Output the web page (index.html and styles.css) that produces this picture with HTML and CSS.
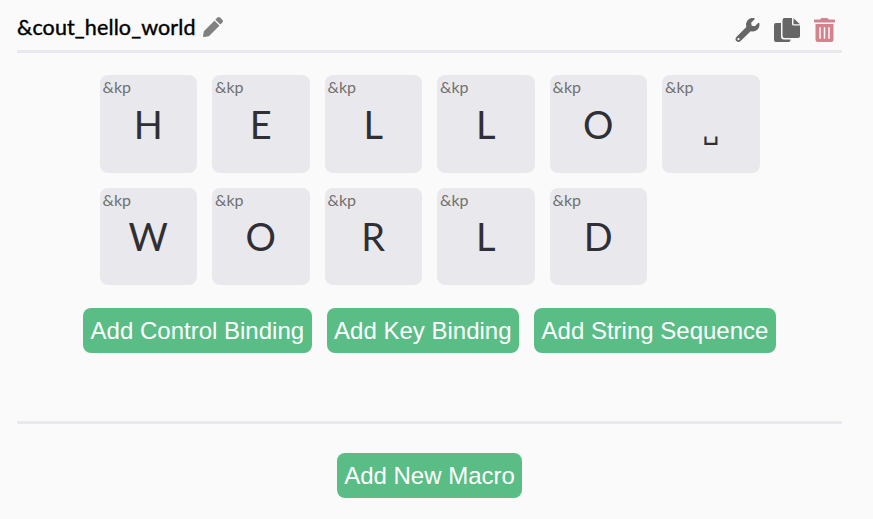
FILE: index.html
```html
<!DOCTYPE html>
<html lang="en">
<head>
<meta charset="utf-8">
<title>Macros</title>
<link rel="stylesheet" href="styles.css">
</head>
<body>
<main class="page">
  <section class="macro">
    <header class="macro-head">
      <div class="macro-title">
        <span class="macro-name">&amp;cout_hello_world</span>
        <svg class="icon icon-pencil" viewBox="0 0 512 512" aria-hidden="true"><path d="M497.900 142.100l-46.100 46.100c-4.700 4.700-12.300 4.700-17 0l-111-111c-4.700-4.700-4.700-12.300 0-17l46.100-46.100c18.700-18.700 49.100-18.700 67.900 0l60.100 60.100c18.800 18.700 18.800 49.100 0 67.900zM284.200 99.800L21.600 362.400.4 483.900c-2.900 16.400 11.400 30.600 27.800 27.800l121.500-21.300 262.600-262.600c4.700-4.700 4.700-12.300 0-17l-111-111c-4.800-4.700-12.400-4.700-17.100 0z"/></svg>
      </div>
      <div class="macro-actions">
        <svg class="icon icon-wrench" viewBox="0 0 512 512" aria-hidden="true"><path d="M507.730 109.100c-2.240-9.030-13.540-12.090-20.120-5.510l-74.360 74.360-67.880-11.310-11.310-67.880 74.360-74.360c6.620-6.620 3.430-17.900-5.660-20.160-47.380-11.740-99.550.91-136.580 37.930-39.640 39.640-50.550 97.100-34.050 147.200L18.740 402.760c-24.990 24.990-24.990 65.510 0 90.500 24.990 24.990 65.510 24.990 90.500 0l213.210-213.210c50.120 16.710 107.470 5.680 147.370-34.220 37.070-37.070 49.700-89.320 37.910-136.730zM64 472c-13.250 0-24-10.750-24-24 0-13.260 10.750-24 24-24s24 10.740 24 24c0 13.250-10.750 24-24 24z"/></svg>
        <svg class="icon icon-copy" viewBox="0 0 26 24" aria-hidden="true"><path d="M10.500 0H18v6a1.500 1.500 0 0 0 1.500 1.500H26V18a2 2 0 0 1-2 2H10.500a2 2 0 0 1-2-2V2a2 2 0 0 1 2-2zM19.500 0.300L26 6.200H19.500zM2 5H7V18.500a3 3 0 0 0 3 3H16.500V22a2 2 0 0 1-2 2H2a2 2 0 0 1-2-2V7a2 2 0 0 1 2-2z"/></svg>
        <svg class="icon icon-trash" viewBox="0 0 448 512" preserveAspectRatio="none" aria-hidden="true"><path d="M32 464a48 48 0 0 0 48 48h288a48 48 0 0 0 48-48V128H32zm272-256a16 16 0 0 1 32 0v224a16 16 0 0 1-32 0zm-96 0a16 16 0 0 1 32 0v224a16 16 0 0 1-32 0zm-96 0a16 16 0 0 1 32 0v224a16 16 0 0 1-32 0zM432 32H312l-9.400-18.700A24 24 0 0 0 281.100 0H166.800a23.720 23.720 0 0 0-21.400 13.300L136 32H16A16 16 0 0 0 0 48v32a16 16 0 0 0 16 16h416a16 16 0 0 0 16-16V48a16 16 0 0 0-16-16z"/></svg>
      </div>
    </header>
    <div class="keys">
      <div class="key"><span class="key-behavior">&amp;kp</span><span class="key-label">H</span></div>
      <div class="key"><span class="key-behavior">&amp;kp</span><span class="key-label">E</span></div>
      <div class="key"><span class="key-behavior">&amp;kp</span><span class="key-label">L</span></div>
      <div class="key"><span class="key-behavior">&amp;kp</span><span class="key-label">L</span></div>
      <div class="key"><span class="key-behavior">&amp;kp</span><span class="key-label">O</span></div>
      <div class="key"><span class="key-behavior">&amp;kp</span><span class="key-label key-space">␣</span></div>
      <div class="key"><span class="key-behavior">&amp;kp</span><span class="key-label">W</span></div>
      <div class="key"><span class="key-behavior">&amp;kp</span><span class="key-label">O</span></div>
      <div class="key"><span class="key-behavior">&amp;kp</span><span class="key-label">R</span></div>
      <div class="key"><span class="key-behavior">&amp;kp</span><span class="key-label">L</span></div>
      <div class="key"><span class="key-behavior">&amp;kp</span><span class="key-label">D</span></div>
    </div>
    <div class="buttons">
      <button class="btn" type="button">Add Control Binding</button>
      <button class="btn" type="button">Add Key Binding</button>
      <button class="btn" type="button">Add String Sequence</button>
    </div>
  </section>
  <div class="footer">
    <button class="btn" type="button">Add New Macro</button>
  </div>
</main>
</body>
</html>
```
FILE: styles.css
```css
* { box-sizing: border-box; }
html, body { margin: 0; height: 100%; }
body {
  background: #fafafb;
  font-family: "Liberation Sans", Arial, sans-serif;
  overflow: hidden;
}
.page { width: 825px; margin-left: 17px; }
.macro { padding-bottom: 68px; border-bottom: 3px solid #e9e9ed; }
.macro-head {
  display: flex;
  justify-content: space-between;
  align-items: center;
  height: 53px;
  padding-top: 6px;
  border-bottom: 3px solid #e9e9ed;
}
.macro-title { display: flex; align-items: center; gap: 7px; margin-top: -3px; }
.macro-name {
  font-family: Lato, sans-serif;
  font-size: 21.5px;
  font-weight: 400;
  letter-spacing: 0.12px;
  -webkit-text-stroke: 0.4px #000;
  color: #000;
}
.icon { display: block; }
.icon-pencil { width: 20px; height: 20px; fill: #808080; }
.macro-actions { display: flex; align-items: center; gap: 14px; padding: 2px 7px 0 0; margin-top: 2px; }
.icon-wrench { width: 25px; height: 24px; fill: #666; }
.icon-copy { width: 26px; height: 24px; fill: #666; }
.icon-trash { width: 21px; height: 24px; fill: #d4838d; }
.keys {
  display: flex;
  flex-wrap: wrap;
  gap: 15px;
  width: 660px;
  margin: 22px auto 0;
}
.key {
  position: relative;
  width: 97.5px;
  height: 97.5px;
  border-radius: 8px;
  background: #e9e9ed;
  display: flex;
  align-items: center;
  justify-content: center;
}
.key-behavior {
  position: absolute;
  top: 2px;
  left: 3px;
  font-family: Lato, sans-serif;
  font-size: 16px;
  color: #707070;
}
.key-label {
  font-family: Lato, sans-serif;
  font-size: 38px;
  color: #2f2f35;
}
.key-space { font-family: "DejaVu Sans", sans-serif; font-size: 26px; padding-top: 12px; }
.buttons { display: flex; justify-content: center; gap: 15px; margin-top: 23px; }
.btn {
  height: 45px;
  padding: 0 7.5px;
  border: 0;
  border-radius: 8px;
  background: #5abd86;
  color: #fff;
  font-family: "Liberation Sans", Arial, sans-serif;
  font-size: 24px;
}
.footer { display: flex; justify-content: center; margin-top: 29px; }
```
